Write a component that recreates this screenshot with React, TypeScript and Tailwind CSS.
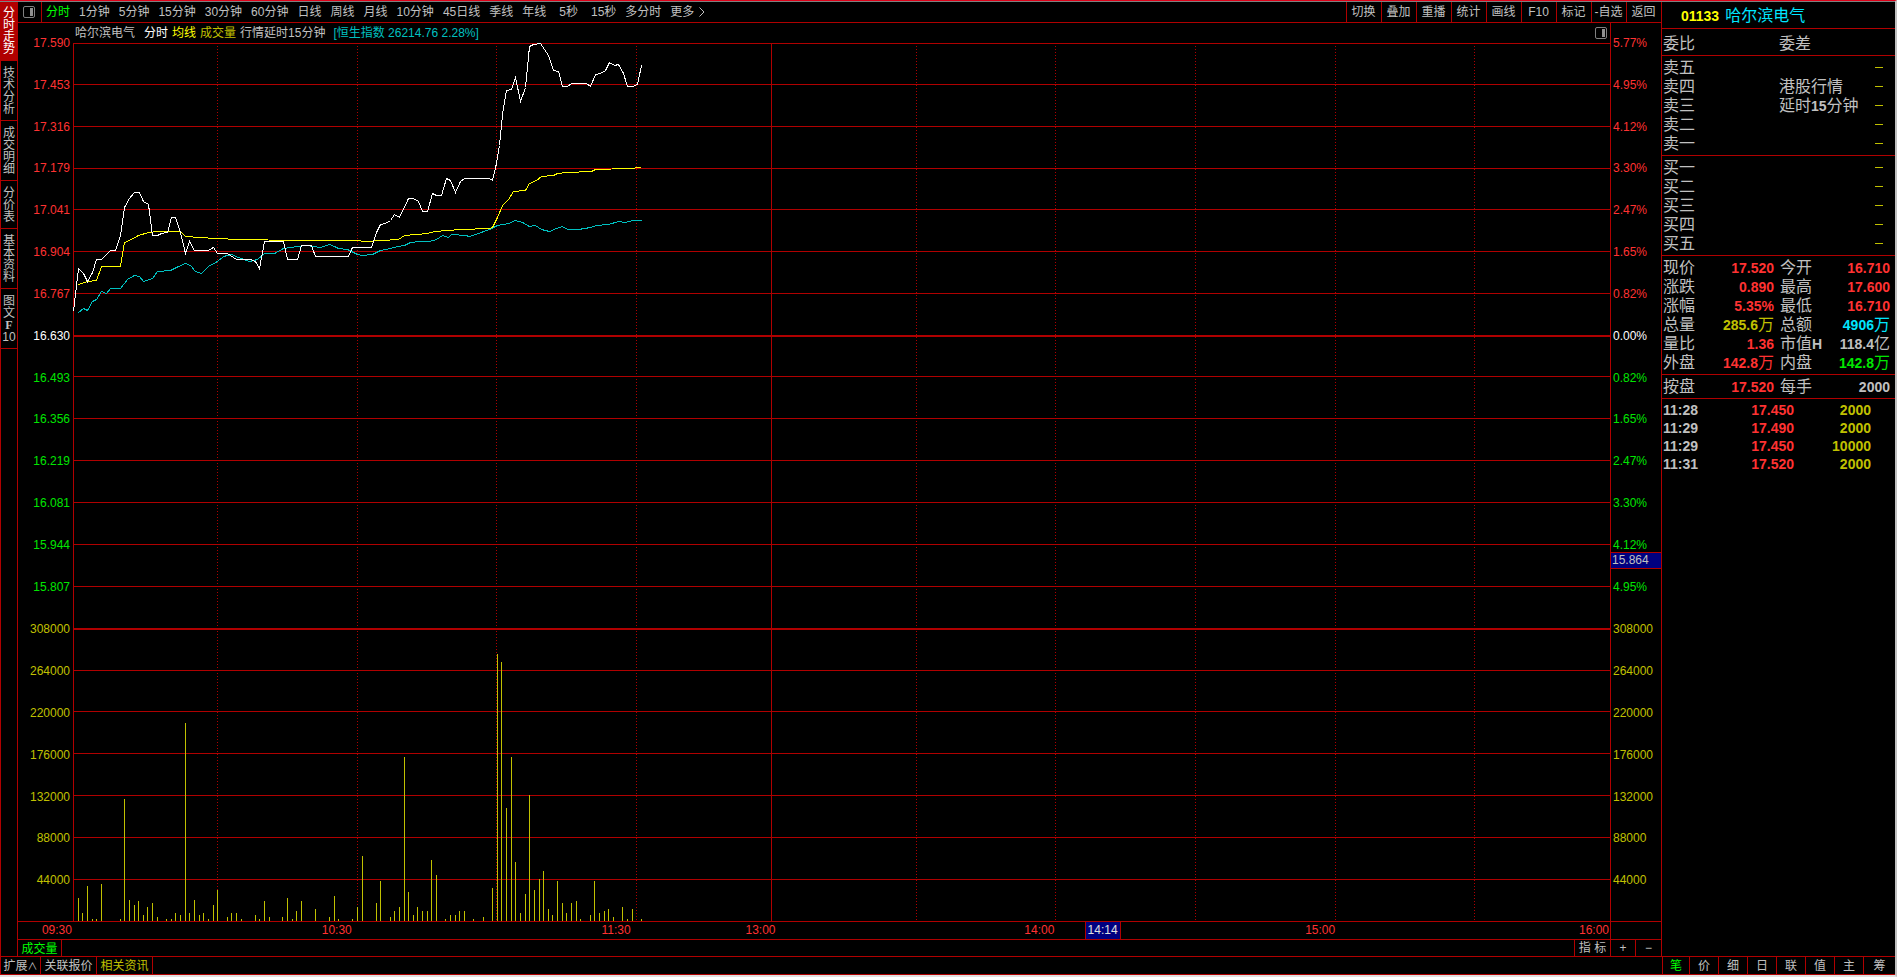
import { ReactNode } from "react";
import clsx from "clsx";

const sideTabs = [
  ["分", "时", "走", "势"],
  ["技", "术", "分", "析"],
  ["成", "交", "明", "细"],
  ["分", "价", "表"],
  ["基", "本", "资", "料"],
  ["图", "文", "F", "10"],
];

const periods = [
  "分时", "1分钟", "5分钟", "15分钟", "30分钟", "60分钟", "日线", "周线", "月线",
  "10分钟", "45日线", "季线", "年线", "5秒", "15秒", "多分时", "更多",
];

const tools = ["切换", "叠加", "重播", "统计", "画线", "F10", "标记", "-自选", "返回"];

const UP = "text-[#ff3232]";
const DOWN = "text-[#00e600]";
const FLAT = "text-white";
const VOL = "text-[#c0c000]";

const axis = [
  { left: "17.590", right: "5.77%", color: UP },
  { left: "17.453", right: "4.95%", color: UP },
  { left: "17.316", right: "4.12%", color: UP },
  { left: "17.179", right: "3.30%", color: UP },
  { left: "17.041", right: "2.47%", color: UP },
  { left: "16.904", right: "1.65%", color: UP },
  { left: "16.767", right: "0.82%", color: UP },
  { left: "16.630", right: "0.00%", color: FLAT },
  { left: "16.493", right: "0.82%", color: DOWN },
  { left: "16.356", right: "1.65%", color: DOWN },
  { left: "16.219", right: "2.47%", color: DOWN },
  { left: "16.081", right: "3.30%", color: DOWN },
  { left: "15.944", right: "4.12%", color: DOWN },
  { left: "15.807", right: "4.95%", color: DOWN },
  { left: "308000", right: "308000", color: VOL },
  { left: "264000", right: "264000", color: VOL },
  { left: "220000", right: "220000", color: VOL },
  { left: "176000", right: "176000", color: VOL },
  { left: "132000", right: "132000", color: VOL },
  { left: "88000", right: "88000", color: VOL },
  { left: "44000", right: "44000", color: VOL },
];

// grow = distancia desde la marca anterior
const times = [
  { label: "09:30", grow: 54 },
  { label: "10:30", grow: 280 },
  { label: "11:30", grow: 279 },
  { label: "13:00", grow: 145 },
  { label: "14:00", grow: 279 },
  { label: "15:00", grow: 281 },
  { label: "16:00", grow: 274 },
];

// Un valor por minuto desde las 09:31
const volumes = [
  23, 8, 35, 2, 2, 37, 0, 0, 0, 2, 122, 21, 16, 20, 6, 14, 18, 4, 0, 2,
  2, 8, 6, 198, 8, 21, 6, 8, 2, 16, 31, 0, 4, 8, 8, 2, 0, 0, 6, 2,
  20, 4, 0, 0, 4, 23, 2, 10, 20, 0, 0, 12, 0, 0, 4, 25, 2, 0, 0, 2,
  14, 65, 0, 0, 18, 40, 0, 4, 10, 14, 164, 29, 6, 14, 10, 10, 61, 46, 0, 2,
  6, 6, 10, 10, 0, 2, 0, 4, 0, 33, 267, 259, 113, 164, 59, 8, 27, 126, 31, 42,
  50, 12, 6, 40, 18, 8, 18, 20, 2, 0, 6, 40, 8, 10, 12, 4, 0, 14, 2, 12,
  0, 2,
];

const priceLine =
  "73,311 78,268 83,273 87,281 92,272 96,259 101,259 106,254 110,250 115,250 120,235 124,207 129,198 134,192 139,192 143,201 148,204 152,235 157,235 161,233 167,232 171,217 175,217 180,232 185,253 189,241 194,250 208,250 213,247 217,253 227,253 236,259 250,259 255,261 259,268 264,241 283,241 287,259 297,259 301,245 311,245 315,256 348,256 352,247 371,247 376,232 380,224 385,223 390,220 394,214 399,217 408,198 413,198 418,201 422,211 427,211 432,193 436,195 441,195 446,178 450,180 455,192 460,181 464,178 489,178 492,180 496,163 499,145 502,114 506,90 511,89 515,77 520,101 525,87 529,46 533,44 540,43 548,55 553,70 558,71 562,86 567,86 571,83 586,83 590,86 595,74 600,73 605,70 609,62 614,65 618,64 623,73 627,86 632,86 637,84 641,65";

const averageLine =
  "78,284 87,281 96,280 101,266 120,266 124,242 129,240 138,235 148,232 157,231 180,231 185,236 215,238 240,239 295,240 355,240 365,241 398,239 404,235 427,233 434,231 460,229 489,228 492,227 497,217 502,205 508,199 513,191 525,190 529,183 536,180 541,176 553,175 557,173 567,172 591,171 595,169 628,168 641,167";

const indexLine =
  "78,312 83,308 87,310 92,301 96,299 101,291 106,293 110,288 120,288 127,279 134,275 139,276 143,281 152,278 157,271 170,270 178,266 185,263 190,265 195,271 201,273 208,266 217,261 223,256 231,254 238,257 249,261 257,259 264,253 274,253 283,248 297,246 306,245 320,247 329,244 334,246 338,248 347,249 357,254 362,255 372,254 380,250 390,248 397,246 404,245 410,242 420,241 429,241 436,239 442,235 448,237 451,234 465,235 469,236 475,234 489,229 497,225 508,223 515,220 522,222 529,226 535,225 541,229 549,231 556,228 562,226 567,229 578,229 590,227 596,225 608,224 618,221 625,222 632,220 641,220";

const gridLines = [
  43, 84, 126, 168, 209, 251, 293, 335, 376, 418, 460, 502, 544, 586, 628, 670, 711, 753, 795,
  837, 879,
];
const dottedLines = [217, 357, 496, 636, 916, 1055, 1195, 1335, 1474];

const quotes = [
  ["现价", "17.520", "", UP, "今开", "16.710", "", UP],
  ["涨跌", "0.890", "", UP, "最高", "17.600", "", UP],
  ["涨幅", "5.35%", "", UP, "最低", "16.710", "", UP],
  ["总量", "285.6", "万", VOL, "总额", "4906", "万", "text-[#00e6ff]"],
  ["量比", "1.36", "", UP, "市值H", "118.4", "亿", "text-[#c0c0c0]"],
  ["外盘", "142.8", "万", UP, "内盘", "142.8", "万", DOWN],
];

const ticks = [
  ["11:28", "17.450", "2000"],
  ["11:29", "17.490", "2000"],
  ["11:29", "17.450", "10000"],
  ["11:31", "17.520", "2000"],
];

const panelTabs = ["笔", "价", "细", "日", "联", "值", "主", "筹"];

function PanelIcon() {
  return (
    <svg className="h-3 w-3" viewBox="0 0 12 12" fill="none">
      <rect x="0.5" y="0.5" width="11" height="11" rx="1.5" stroke="#808080" />
      <rect x="7" y="2" width="3" height="8" fill="#909090" />
    </svg>
  );
}

function Chart() {
  return (
    <svg
      className="block h-full w-full"
      viewBox="73 43 1537 878"
      preserveAspectRatio="none"
      shapeRendering="crispEdges"
      fill="none"
    >
      {/* Cuadrícula */}
      {gridLines.map((y, i) => (
        <rect key={y} x="73" y={y} width="1537" height={i === 7 || i === 14 ? 2 : 1} fill="#b00000" />
      ))}
      {dottedLines.map((x) => (
        <path key={x} d={`M${x + 0.5} 46V921`} stroke="#b00000" strokeDasharray="1 2" />
      ))}
      <rect x="73" y="43" width="1" height="878" fill="#b00000" />
      <rect x="771" y="43" width="1" height="878" fill="#b00000" />

      {/* Volumen */}
      {volumes.map((v, i) => (
        <rect
          key={i}
          x={Math.round(73 + (i + 1) * 4.655)}
          y={921 - v}
          width="1"
          height={v}
          fill="#c0c000"
        />
      ))}

      {/* Precio, media e índice */}
      <g transform="translate(0.5 0.5)">
        <polyline points={indexLine} stroke="#00c0c0" />
        <polyline points={averageLine} stroke="#ffff00" />
        <polyline points={priceLine} stroke="#ffffff" />
      </g>
    </svg>
  );
}

function AxisLabels({ side }: { side: "left" | "right" }) {
  return (
    <>
      {axis.map((a, i) => (
        <div key={i} className={clsx("min-h-0 flex-1", a.color)}>
          <span className={clsx("block", a.color === VOL ? "-mt-[7px]" : "-mt-2")}>{a[side]}</span>
        </div>
      ))}
    </>
  );
}

function Num({ children }: { children: ReactNode }) {
  return <span className="text-sm leading-none font-bold">{children}</span>;
}

function DepthRows({ side, levels }: { side: string; levels: string[] }) {
  return (
    <ul className="border-b border-[#b00000] pt-[2px] pb-[2px]">
      {levels.map((level) => (
        <li key={level} className="flex h-[19px] items-center pr-3 pl-px">
          <span className="w-[116px]">
            {side}
            {level}
          </span>
          <span className="grow whitespace-nowrap">
            {side + level === "卖四" && "港股行情"}
            {side + level === "卖三" && (
              <>
                延时<Num>15</Num>分钟
              </>
            )}
          </span>
          <span className="h-px w-2 bg-[#c0c000]" />
        </li>
      ))}
    </ul>
  );
}

function QuoteRow({ row }: { row: string[] }) {
  const [labelA, valueA, unitA, colorA, labelB, valueB, unitB, colorB] = row;
  return (
    <div className="flex h-[19px] items-center pr-[5px] pl-px whitespace-nowrap">
      <dt>{labelA}</dt>
      <dd className={clsx("grow text-right", colorA)}>
        <Num>{valueA}</Num>
        {unitA}
      </dd>
      <dt className="ml-[6px] w-10">
        {labelB.slice(0, 2)}
        <Num>{labelB.slice(2)}</Num>
      </dt>
      <dd className={clsx("w-[70px] text-right", colorB)}>
        <Num>{valueB}</Num>
        {unitB}
      </dd>
    </div>
  );
}

function QuotePanel() {
  return (
    <aside className="w-[234px] shrink-0 border-l border-[#b00000] text-base leading-none text-[#c0c0c0]">
      <h1 className="flex h-[27px] items-center gap-[6px] border-b border-[#b00000] pt-[2px] pl-[19px] text-[#00e6ff]">
        <span className="text-sm font-bold text-[#ffff00]">01133</span>
        哈尔滨电气
      </h1>
      <div className="flex h-[27px] items-center border-b border-[#b00000] pt-[3px] pl-px">
        <span className="w-[116px]">委比</span>
        <span>委差</span>
      </div>
      <DepthRows side="卖" levels={["五", "四", "三", "二", "一"]} />
      <DepthRows side="买" levels={["一", "二", "三", "四", "五"]} />
      <dl className="border-b border-[#b00000] py-[2px]">
        {quotes.map((row) => (
          <QuoteRow key={row[0]} row={row} />
        ))}
      </dl>
      <dl className="border-b border-[#b00000] py-[2px]">
        <QuoteRow row={["按盘", "17.520", "", UP, "每手", "2000", "", "text-[#c0c0c0]"]} />
      </dl>
      <table className="mt-[2px] w-full table-fixed text-sm leading-none font-bold">
        <tbody>
          {ticks.map(([time, price, volume], i) => (
            <tr key={i} className="h-[18px]">
              <td className="w-14 p-0 pl-px">{time}</td>
              <td className="w-[76px] p-0 text-right text-[#ff3232]">{price}</td>
              <td className="p-0 pr-6 text-right text-[#c0c000]">{volume}</td>
            </tr>
          ))}
        </tbody>
      </table>
    </aside>
  );
}

export default function App() {
  return (
    <div className="flex h-screen flex-col overflow-hidden border-t border-r-2 border-b-2 border-t-[#e00018] border-r-[#c0c0c0] border-b-[#e0e0e0] bg-black font-['Liberation_Sans','Noto_Sans_CJK_SC',sans-serif] text-xs leading-none text-[#c0c0c0]">
      <div className="h-px shrink-0 bg-[#808080]" />

      <main className="flex min-h-0 flex-1">
        {/* Pestañas verticales */}
        <nav className="w-[18px] shrink-0 border-x border-[#b00000]">
          {sideTabs.map((chars, i) => (
            <button
              key={i}
              type="button"
              className={clsx(
                "flex w-full flex-col items-center border-b border-[#b00000] pt-[6px] pb-[5px] leading-3 first:pt-[5px]",
                i === 0 && "bg-[#b00000] text-white"
              )}
            >
              {chars.map((c) => (
                <span key={c} className={clsx(c === "F" && "font-['Liberation_Serif'] font-bold")}>
                  {c}
                </span>
              ))}
            </button>
          ))}
        </nav>

        <section className="flex min-w-0 flex-1 flex-col">
          {/* Barra de periodos */}
          <header className="flex h-[21px] shrink-0 items-stretch border-b border-[#b00000] whitespace-nowrap">
            <button
              type="button"
              aria-label="面板"
              className="flex w-6 items-center justify-center border-r border-[#b00000] pr-px"
            >
              <PanelIcon />
            </button>
            <nav className="flex grow items-center gap-[9px] pl-1">
              {periods.map((p, i) => (
                <button
                  key={p}
                  type="button"
                  className={clsx(i === 0 && "text-[#00ff00]", p.endsWith("秒") && "pl-1")}
                >
                  {p}
                </button>
              ))}
              <svg className="-ml-1 h-[10px] w-[6px]" viewBox="0 0 6 10" fill="none">
                <path d="M0.5 0.5L5 5L0.5 9.5" stroke="#c0c0c0" />
              </svg>
            </nav>
            {tools.map((t) => (
              <button key={t} type="button" className="w-[35px] border-l border-[#b00000] pr-px">
                {t}
              </button>
            ))}
          </header>

          <div className="flex min-h-0 flex-1 border-b border-[#b00000]">
            <div className="flex min-w-0 flex-1 flex-col">
              <div className="flex h-5 shrink-0 items-center gap-1 pr-[3px] pl-[57px] whitespace-nowrap">
                <span className="mr-[5px]">哈尔滨电气</span>
                <span className="text-white">分时</span>
                <span className="text-[#ffff00]">均线</span>
                <span className="text-[#c0c000]">成交量</span>
                <span className="mr-1">行情延时15分钟</span>
                <span className="grow text-[#00c0c0]">[恒生指数 26214.76 2.28%]</span>
                <button type="button" aria-label="侧栏">
                  <PanelIcon />
                </button>
              </div>
              <div className="flex min-h-0 flex-1">
                <div className="flex w-[55px] shrink-0 flex-col pr-[3px] text-right leading-4">
                  <AxisLabels side="left" />
                </div>
                <div className="min-w-0 flex-1">
                  <Chart />
                </div>
              </div>
            </div>
            <div className="relative flex w-[51px] shrink-0 flex-col border-l border-[#b00000] pt-5 pl-[2px] leading-4">
              <AxisLabels side="right" />
              <div className="absolute inset-x-0 top-[59%] -mt-px h-[17px] border-y border-[#b00000] bg-[#000080] pl-px leading-[15px]">
                15.864
              </div>
            </div>
          </div>

          {/* Eje de tiempo */}
          <div className="flex h-[18px] shrink-0 border-b border-[#b00000] leading-[17px]">
            <div className="relative flex flex-1 pr-px text-[#ff3232]">
              {times.map((t) => (
                <span key={t.label} className="basis-0 text-right" style={{ flexGrow: t.grow }}>
                  {t.label}
                </span>
              ))}
              <span className="absolute top-0 left-[67%] h-[17px] w-9 border-x border-[#b00000] bg-[#000080] text-center text-[#e0e0e0]">
                14:14
              </span>
            </div>
            <div className="w-[51px] border-l border-[#b00000]" />
          </div>

          <div className="flex h-4 shrink-0 items-stretch justify-between">
            <button type="button" className="w-11 border-r border-[#b00000] pt-px text-[#00ff00]">
              成交量
            </button>
            <div className="flex">
              <button type="button" className="w-9 border-l border-[#b00000]">
                指 标
              </button>
              <button type="button" className="w-[25px] border-l border-[#b00000]">
                +
              </button>
              <button type="button" className="w-[26px] border-l border-[#b00000]">
                −
              </button>
            </div>
          </div>
        </section>

        <QuotePanel />
      </main>

      <footer className="flex h-[19px] shrink-0 items-stretch border-y border-l border-[#b00000]">
        <button type="button" className="w-10 border-r border-[#b00000] pt-px">
          扩展<span className="text-[10px]">∧</span>
        </button>
        <button type="button" className="w-14 border-r border-[#b00000] pt-px">
          关联报价
        </button>
        <button type="button" className="w-14 border-r border-[#b00000] pt-px text-[#c0c000]">
          相关资讯
        </button>
        <div className="grow" />
        <div className="flex w-[233px]">
          {panelTabs.map((t, i) => (
            <button
              key={t}
              type="button"
              className="w-[29px] border-l border-[#b00000] pt-px first:w-[27px] first:text-[#00ff00] last:grow"
            >
              {t}
            </button>
          ))}
        </div>
      </footer>
    </div>
  );
}
